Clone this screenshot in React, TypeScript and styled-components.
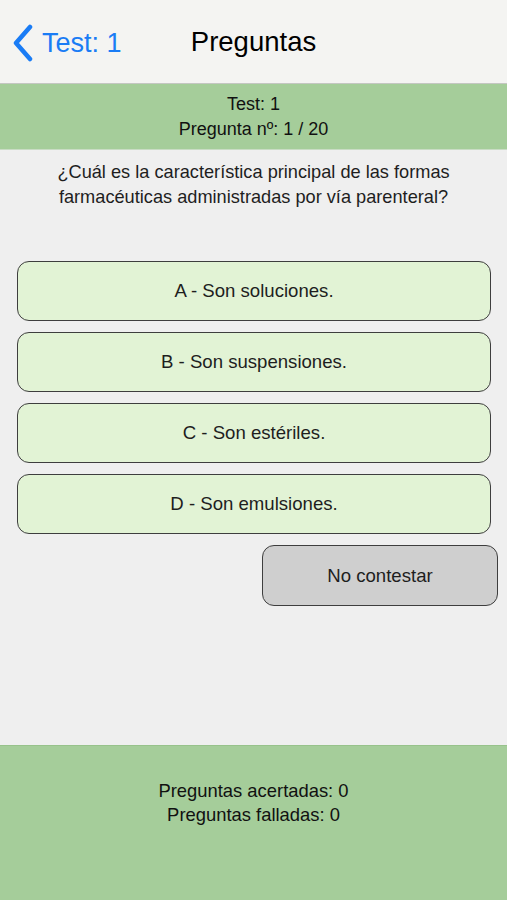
import styled, { createGlobalStyle } from "styled-components";

const GlobalStyle = createGlobalStyle`
  html, body {
    margin: 0;
    padding: 0;
    background: #efefef;
  }
  body {
    font-family: "Liberation Sans", Arial, sans-serif;
  }
`;

const answers = [
  "A - Son soluciones.",
  "B - Son suspensiones.",
  "C - Son estériles.",
  "D - Son emulsiones.",
];

const App = () => {
  return (
    <>
      <GlobalStyle />
      <Screen>
        <NavBar>
          <BackButton>
            <svg width="22" height="38" viewBox="0 0 22 38">
              <path
                d="M18 3 L4 19 L18 35"
                fill="none"
                stroke="#1a7cf5"
                strokeWidth="4.5"
                strokeLinecap="round"
                strokeLinejoin="round"
              />
            </svg>
            <BackLabel>Test: 1</BackLabel>
          </BackButton>
          <NavTitle>Preguntas</NavTitle>
        </NavBar>
        <InfoBar>
          <div>Test: 1</div>
          <div>Pregunta nº: 1 / 20</div>
        </InfoBar>
        <Content>
          <Question>
            ¿Cuál es la característica principal de las formas
            <br />
            farmacéuticas administradas por vía parenteral?
          </Question>
          <AnswerList>
            {answers.map((answer) => (
              <AnswerButton key={answer}>{answer}</AnswerButton>
            ))}
          </AnswerList>
          <SkipRow>
            <SkipButton>No contestar</SkipButton>
          </SkipRow>
        </Content>
        <Footer>
          <div>Preguntas acertadas: 0</div>
          <div>Preguntas falladas: 0</div>
        </Footer>
      </Screen>
    </>
  );
};

export default App;

const Screen = styled.div`
  width: 507px;
  height: 900px;
  display: flex;
  flex-direction: column;
  background: #efefef;
  overflow: hidden;
`;

const NavBar = styled.div`
  position: relative;
  height: 83px;
  flex-shrink: 0;
  display: flex;
  align-items: center;
  justify-content: center;
  background: #f4f4f2;
  border-bottom: 1px solid #c4c7c2;
`;

const BackButton = styled.div`
  position: absolute;
  left: 12px;
  top: 24px;
  display: flex;
  align-items: center;
  gap: 8px;
`;

const BackLabel = styled.span`
  color: #1a7cf5;
  font-size: 27px;
`;

const NavTitle = styled.div`
  color: #000;
  font-size: 27.5px;
`;

const InfoBar = styled.div`
  height: 66px;
  flex-shrink: 0;
  box-sizing: border-box;
  padding-top: 8px;
  background: #a5cd9a;
  border-bottom: 1px solid #c9dcc4;
  text-align: center;
  font-size: 18px;
  line-height: 25px;
  color: #111;
`;

const Content = styled.div`
  flex: 1;
  display: flex;
  flex-direction: column;
`;

const Question = styled.div`
  padding-top: 10px;
  text-align: center;
  font-size: 18.2px;
  line-height: 25px;
  color: #1e1e1e;
  height: 101px;
`;

const AnswerList = styled.div`
  display: flex;
  flex-direction: column;
  gap: 11px;
  padding: 0 16px 0 17px;
`;

const AnswerButton = styled.div`
  height: 60px;
  box-sizing: border-box;
  display: flex;
  align-items: center;
  justify-content: center;
  background: #e2f3d5;
  border: 1.5px solid #3e3e3e;
  border-radius: 12px;
  font-size: 18.6px;
  color: #1e1e1e;
`;

const SkipRow = styled.div`
  display: flex;
  justify-content: flex-end;
  padding: 11px 9px 0 0;
`;

const SkipButton = styled.div`
  width: 236px;
  height: 61px;
  box-sizing: border-box;
  display: flex;
  align-items: center;
  justify-content: center;
  background: #cfcfcf;
  border: 1.5px solid #3e3e3e;
  border-radius: 12px;
  font-size: 18.6px;
  color: #1e1e1e;
`;

const Footer = styled.div`
  height: 155px;
  flex-shrink: 0;
  box-sizing: border-box;
  padding-top: 33px;
  background: #a5cd9a;
  border-top: 1px solid #97c28b;
  text-align: center;
  font-size: 18.4px;
  line-height: 24px;
  color: #111;
`;
